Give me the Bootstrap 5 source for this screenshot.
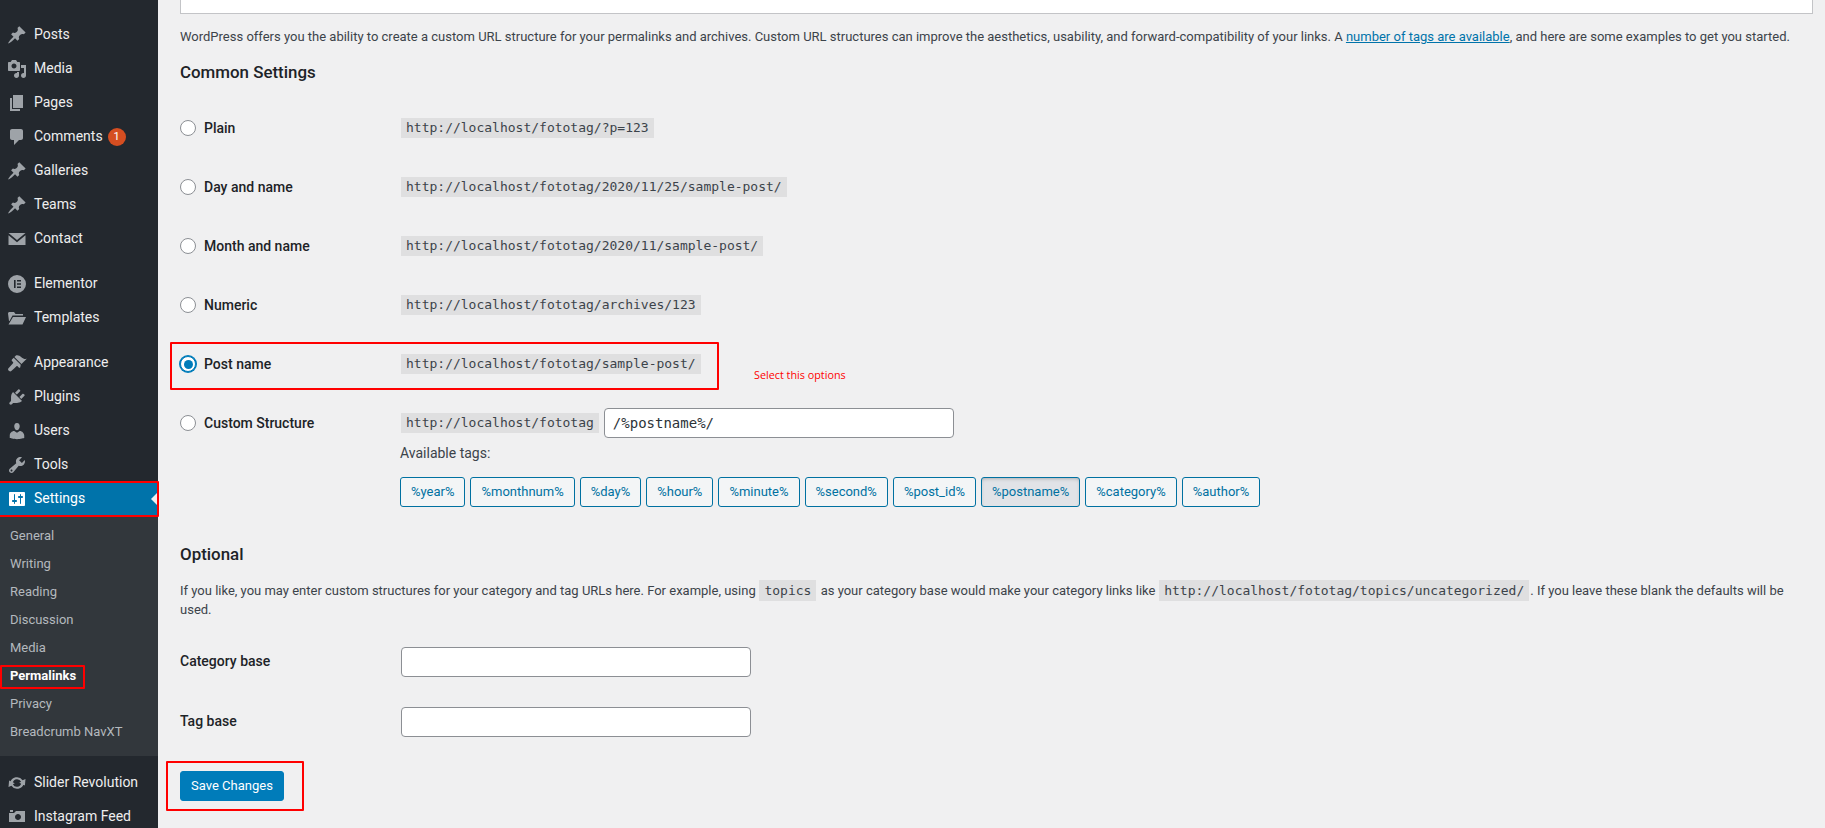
<!DOCTYPE html>
<html lang="en">
<head>
<meta charset="utf-8">
<title>Permalink Settings</title>
<link href="https://cdn.jsdelivr.net/npm/bootstrap@5.3.0/dist/css/bootstrap.min.css" rel="stylesheet">
<style>
html,body{height:828px;overflow:hidden}
body{background:#f0f0f1;font-family:Roboto,"Liberation Sans",sans-serif;font-size:13px;line-height:19.5px;color:#3c434a;position:relative}
.wp-side{width:158px;height:828px;background:#23282e;flex:none;overflow:hidden;padding-top:18px}
.wp-item{height:34px;display:flex;align-items:center;padding-left:7px;color:#eee;font-size:14px;text-decoration:none}
.wp-item svg{width:20px;height:20px;fill:#9ea3a8;margin-right:7px;flex:none}
.wp-gap{height:11px}
.wp-gap2{height:11px}
.wp-gap3{height:10px}
.wp-current{background:#0073aa;color:#fff;position:relative;height:34px}
.wp-current svg{fill:#fff}
.wp-current::after{content:"";position:absolute;right:0;top:10px;border:7px solid transparent;border-right-color:#f0f0f1;border-left-width:0}
.wp-sub{background:#32373c;padding:6px 0 10px}
.wp-sublink{display:block;height:28px;line-height:28px;padding-left:10px;font-size:13px;text-decoration:none}
.wp-sub .wp-sublink{color:#b4b9be}
.wp-sub .wp-on{color:#fff;font-weight:700}
.wp-bubble{display:inline-block;width:18px;height:18px;border-radius:50%;background:#d54e21;color:#fff;font-size:11px;line-height:18px;text-align:center;margin-left:5px}
.wp-main{flex:1 1 auto;padding:0 12px 0 22px;min-width:0}
.wp-topbox{height:14px;background:#fff;border:1px solid #c3c4c7;border-top:0}
.wp-intro{margin:13px 0 0;height:20px;white-space:nowrap}
.wp-intro a{color:#0073aa;text-decoration:underline}
.wp-h{font-size:16.9px;font-weight:500;color:#1d2327;line-height:22px;margin:0}
.wp-h1{margin-top:14px;margin-bottom:30px}
.wp-row{display:flex;align-items:flex-start;height:59px}
.wp-lab{width:220px;flex:none;display:flex;align-items:center;height:30px;font-size:14px;font-weight:500;color:#1d2327}
.wp-labtxt{padding-top:1px}
.wp-radio{width:16px;height:16px;border:1px solid #8c8f94;border-radius:50%;background:#fff;margin-right:8px;flex:none;display:block;position:relative}
.wp-radio.wp-sel{border-color:#007cba;box-shadow:0 0 0 1px #007cba}
.wp-radio.wp-sel::before{content:"";position:absolute;left:2.5px;top:2.5px;width:9px;height:9px;border-radius:50%;background:#007cba}
.wp-code{font-family:"DejaVu Sans Mono","Liberation Mono",monospace;font-size:13px;background:rgba(0,0,0,.07);color:#3c434a;padding:0 5px;margin-left:1px;line-height:20px;display:inline-block}
.wp-urlcell{height:30px;display:flex;align-items:center}
.wp-input{border:1px solid #8c8f94;border-radius:4px;background:#fff;height:30px}
.wp-struct{width:350px;margin-left:5px;padding:0 8px;font-family:"DejaVu Sans Mono","Liberation Mono",monospace;font-size:14px;color:#2c3338;line-height:28px}
.wp-avail{margin-top:6px;height:20px;font-size:14px}
.wp-tags{margin-top:12.5px;gap:5px}
.wp-tag{height:30px;border:1px solid #0071a1;border-radius:3px;background:#f3f5f6;color:#0071a1;font-size:13px;line-height:28px;padding:0 10px;display:block}
.wp-tag.wp-act{background:#e1e3e7;box-shadow:inset 0 2px 5px -3px rgba(0,0,0,.5)}
.wp-opt{margin-top:36px}
.wp-para{margin:16px 0 0;padding-right:2px;line-height:19px}
.wp-code2{font-family:"DejaVu Sans Mono","Liberation Mono",monospace;font-size:13px;line-height:1;background:rgba(0,0,0,.07);padding:3px 5px;margin:0 1px 0 .5px}
.wp-frow{display:flex;align-items:center;height:60px}
.wp-frow .wp-lab{height:auto;width:221px}
.wp-frow .wp-input{width:350px}
.wp-forms{margin-top:13px}
.wp-save{margin-top:19px;width:104px;height:30px;background:#007cba;color:#fff;border:1px solid #007cba;border-radius:3px;font-size:13px;line-height:28px;padding:0;display:block}
.wp-note{position:absolute;left:754px;top:366px;color:#f00;font-family:"Open Sans","Liberation Sans",sans-serif;font-size:10.8px;line-height:18px}
.wp-mark{position:absolute;border:2px solid #f00;border-radius:1px;pointer-events:none}
.wp-m1{left:170px;top:342px;width:549px;height:48px}
.wp-m2{left:-2px;top:481px;width:161px;height:36px}
.wp-m3{left:0;top:665px;width:85px;height:24px}
.wp-m4{left:166px;top:761px;width:138px;height:50px}
</style>
</head>
<body>
<div class="d-flex">
  <nav class="wp-side">
    <a class="wp-item"><svg viewBox="0 0 20 20"><path d="M10.44 3.02l1.82-1.82 6.36 6.35-1.83 1.82c-1.05-.68-2.48-.57-3.41.36l-.75.75c-.92.93-1.04 2.35-.35 3.41l-1.83 1.82-2.41-2.41-2.8 2.79c-.42.42-3.38 2.71-3.8 2.29s1.86-3.39 2.28-3.81l2.79-2.79L4.1 9.36l1.83-1.82c1.05.69 2.48.57 3.4-.36l.75-.75c.93-.92 1.05-2.35.36-3.41z"/></svg>Posts</a>
    <a class="wp-item"><svg viewBox="0 0 20 20"><path fill-rule="evenodd" d="M13 11V4c0-.55-.45-1-1-1h-1.670L9 1H5L3.670 3H2c-.55 0-1 .45-1 1v7c0 .55.45 1 1 1h10c.55 0 1-.45 1-1zM7 4.500c1.380 0 2.500 1.120 2.500 2.500S8.380 9.500 7 9.500 4.500 8.380 4.500 7 5.620 4.500 7 4.500zM14 6h5v10.500c0 1.380-1.120 2.500-2.500 2.500S14 17.880 14 16.500s1.120-2.500 2.500-2.500c.17 0 .34.02.5.05V9h-3V6zm-4 8.050V13h2v3.500c0 1.380-1.120 2.500-2.500 2.500S7 17.880 7 16.500 8.120 14 9.500 14c.17 0 .34.02.5.05z"/></svg>Media</a>
    <a class="wp-item"><svg viewBox="0 0 20 20"><path d="M6 15V2h10v13H6zm-1 1h8v2H3V5h2v11z"/></svg>Pages</a>
    <a class="wp-item"><svg viewBox="0 0 20 20"><path d="M5 2h9c1.100 0 2 .9 2 2v7c0 1.100-.9 2-2 2h-2l-5 5v-5H5c-1.100 0-2-.9-2-2V4c0-1.100.9-2 2-2z"/></svg>Comments<span class="wp-bubble">1</span></a>
    <a class="wp-item"><svg viewBox="0 0 20 20"><path d="M10.44 3.02l1.82-1.82 6.36 6.35-1.83 1.82c-1.05-.68-2.48-.57-3.41.36l-.75.75c-.92.93-1.04 2.35-.35 3.41l-1.83 1.82-2.41-2.41-2.8 2.79c-.42.42-3.38 2.71-3.8 2.29s1.86-3.39 2.28-3.81l2.79-2.79L4.1 9.36l1.83-1.82c1.05.69 2.48.57 3.4-.36l.75-.75c.93-.92 1.05-2.35.36-3.41z"/></svg>Galleries</a>
    <a class="wp-item"><svg viewBox="0 0 20 20"><path d="M10.44 3.02l1.82-1.82 6.36 6.35-1.83 1.82c-1.05-.68-2.48-.57-3.41.36l-.75.75c-.92.93-1.04 2.35-.35 3.41l-1.83 1.82-2.41-2.41-2.8 2.79c-.42.42-3.38 2.71-3.8 2.29s1.86-3.39 2.28-3.81l2.79-2.79L4.1 9.36l1.83-1.82c1.05.69 2.48.57 3.4-.36l.75-.75c.93-.92 1.05-2.35.36-3.41z"/></svg>Teams</a>
    <a class="wp-item"><svg viewBox="0 0 20 20"><path d="M1.500 4h17L10 11zM1.500 6.200V16h17V6.200L10 13.200z"/></svg>Contact</a>
    <div class="wp-gap"></div>
    <a class="wp-item"><svg viewBox="0 0 20 20"><path fill-rule="evenodd" d="M10 1a9 9 0 1 1 0 18 9 9 0 0 1 0-18zM7 6v8h1.600V6zm3 0v1.600h4V6zm0 3.200v1.600h4V9.200zm0 3.200V14h4v-1.600z"/></svg>Elementor</a>
    <a class="wp-item"><svg viewBox="0 0 20 20"><path d="M1 5.500C1 4.700 1.700 4 2.500 4H7l1.500 2H16v1.500H5.500L2.500 13H2zM6 9h13l-3.500 7.500H1.500z"/></svg>Templates</a>
    <div class="wp-gap2"></div>
    <a class="wp-item"><svg viewBox="0 0 20 20"><path d="M14.480 11.060L7.410 3.990l1.500-1.500c.5-.56 2.300-.47 3.510.32 1.210.8 1.430 1.280 2.910 2.100 1.180.64 2.450 1.260 4.450.85zm-.71.71L6.700 4.700 4.930 6.470c-.39.39-.39 1.020 0 1.410l1.060 1.060c.39.39.39 1.030 0 1.420-.6.6-1.060 1.200-1.800 1.900L1.500 15.300c-.6.6-.6 1.500 0 2.100l.7.7c.6.6 1.500.6 2.100 0l3.100-2.900c.7-.7 1.300-1.200 1.900-1.800.39-.39 1.030-.39 1.420 0l1.060 1.060c.39.39 1.020.39 1.410 0z"/></svg>Appearance</a>
    <a class="wp-item"><svg viewBox="0 0 20 20"><path d="M13.110 4.360L9.870 7.600 8 5.730l3.240-3.240c.35-.34 1.050-.2 1.560.32.52.51.66 1.210.31 1.550zm-8 1.770l.91-1.120 9.010 9.010-1.190.84c-.71.71-2.630 1.160-3.820 1.160H6.140L4.900 17.260c-.59.59-1.540.59-2.120 0-.59-.58-.59-1.530 0-2.120l1.240-1.240v-3.880c0-1.130.4-3.190 1.090-3.890zm7.260 3.970l3.240-3.240c.34-.35 1.040-.21 1.550.31.52.51.66 1.210.31 1.550l-3.240 3.250z"/></svg>Plugins</a>
    <a class="wp-item"><svg viewBox="0 0 20 20"><path d="M10 9.250c-2.270 0-2.730-3.440-2.730-3.440C7 4.020 7.820 2 9.970 2c2.160 0 2.980 2.020 2.710 3.810 0 0-.41 3.440-2.680 3.440zm0 2.570L12.720 10c2.390 0 4.520 2.330 4.520 4.530v2.490s-3.650 1.130-7.240 1.130c-3.650 0-7.240-1.130-7.240-1.130v-2.490c0-2.250 1.940-4.480 4.470-4.480z"/></svg>Users</a>
    <a class="wp-item"><svg viewBox="0 0 20 20"><path fill-rule="evenodd" d="M16.680 9.770c-1.340 1.340-3.300 1.670-4.950.99l-5.410 6.520c-.99.99-2.590.99-3.580 0s-.99-2.590 0-3.570l6.520-5.420c-.68-1.650-.35-3.610.99-4.950 1.280-1.280 3.120-1.620 4.720-1.060l-2.890 2.890 2.820 2.820 2.860-2.870c.53 1.580.18 3.390-1.080 4.650zM3.810 16.210c.4.39 1.040.39 1.430 0 .4-.4.4-1.040 0-1.430-.39-.4-1.030-.4-1.430 0-.39.39-.39 1.030 0 1.430z"/></svg>Tools</a>
    <a class="wp-item wp-current"><svg viewBox="0 0 20 20"><path fill-rule="evenodd" d="M18 16V4c0-.55-.45-1-1-1H3c-.55 0-1 .45-1 1v12c0 .55.45 1 1 1h14c.55 0 1-.45 1-1zM8 11h1c.55 0 1 .45 1 1s-.45 1-1 1H8v1.500c0 .28-.22.5-.5.5s-.5-.22-.5-.5V13H6c-.55 0-1-.45-1-1s.45-1 1-1h1V5.500c0-.28.22-.5.5-.5s.5.22.5.5V11zm5-2h-1c-.55 0-1-.45-1-1s.45-1 1-1h1V5.500c0-.28.22-.5.5-.5s.5.22.5.5V7h1c.55 0 1 .45 1 1s-.45 1-1 1h-1v5.500c0 .28-.22.5-.5.5s-.5-.22-.5-.5V9z"/></svg>Settings</a>
    <div class="wp-sub">
      <a class="wp-sublink">General</a><a class="wp-sublink">Writing</a><a class="wp-sublink">Reading</a><a class="wp-sublink">Discussion</a><a class="wp-sublink">Media</a><a class="wp-sublink wp-on">Permalinks</a><a class="wp-sublink">Privacy</a><a class="wp-sublink">Breadcrumb NavXT</a>
    </div>
    <div class="wp-gap3"></div>
    <a class="wp-item"><svg viewBox="0 0 20 20"><path d="M3.200 9.500A6.900 6.900 0 0 1 15.600 7.200L18.500 6l-.6 6.500-5.700-2.800 1.900-.9A4.400 4.400 0 0 0 5.800 9.500zM16.800 10.500A6.900 6.900 0 0 1 4.400 12.800L1.500 14l.6-6.500 5.700 2.800-1.900.9a4.400 4.400 0 0 0 8.300-.7z"/></svg>Slider Revolution</a>
    <a class="wp-item"><svg viewBox="0 0 20 20"><path fill-rule="evenodd" d="M6 5V3H3v2h3zm12 10V4H9L7 6H2v9h16zm-7-8c-1.660 0-3 1.340-3 3s1.340 3 3 3 3-1.340 3-3-1.340-3-3-3z"/></svg>Instagram Feed</a>
  </nav>
  <main class="wp-main">
    <div class="wp-topbox"></div>
    <p class="wp-intro">WordPress offers you the ability to create a custom URL structure for your permalinks and archives. Custom URL structures can improve the aesthetics, usability, and forward-compatibility of your links. A <a href="#">number of tags are available</a>, and here are some examples to get you started.</p>
    <h2 class="wp-h wp-h1">Common Settings</h2>
    <div class="wp-row"><div class="wp-lab"><span class="wp-radio"></span><span class="wp-labtxt">Plain</span></div><div class="wp-urlcell"><code class="wp-code">http://localhost/fototag/?p=123</code></div></div>
    <div class="wp-row"><div class="wp-lab"><span class="wp-radio"></span><span class="wp-labtxt">Day and name</span></div><div class="wp-urlcell"><code class="wp-code">http://localhost/fototag/2020/11/25/sample-post/</code></div></div>
    <div class="wp-row"><div class="wp-lab"><span class="wp-radio"></span><span class="wp-labtxt">Month and name</span></div><div class="wp-urlcell"><code class="wp-code">http://localhost/fototag/2020/11/sample-post/</code></div></div>
    <div class="wp-row"><div class="wp-lab"><span class="wp-radio"></span><span class="wp-labtxt">Numeric</span></div><div class="wp-urlcell"><code class="wp-code">http://localhost/fototag/archives/123</code></div></div>
    <div class="wp-row"><div class="wp-lab"><span class="wp-radio wp-sel"></span><span class="wp-labtxt">Post name</span></div><div class="wp-urlcell"><code class="wp-code">http://localhost/fototag/sample-post/</code></div></div>
    <div class="d-flex">
      <div class="wp-lab"><span class="wp-radio"></span><span class="wp-labtxt">Custom Structure</span></div>
      <div>
        <div class="wp-urlcell"><code class="wp-code">http://localhost/fototag</code><div class="wp-input wp-struct">/%postname%/</div></div>
        <div class="wp-avail">Available tags:</div>
        <div class="d-flex wp-tags">
          <span class="wp-tag">%year%</span><span class="wp-tag">%monthnum%</span><span class="wp-tag">%day%</span><span class="wp-tag">%hour%</span><span class="wp-tag">%minute%</span><span class="wp-tag">%second%</span><span class="wp-tag">%post_id%</span><span class="wp-tag wp-act">%postname%</span><span class="wp-tag">%category%</span><span class="wp-tag">%author%</span>
        </div>
      </div>
    </div>
    <h2 class="wp-h wp-opt">Optional</h2>
    <p class="wp-para">If you like, you may enter custom structures for your category and tag URLs here. For example, using <code class="wp-code2 text-reset">topics</code> as your category base would make your category links like <code class="wp-code2 text-reset">http://localhost/fototag/topics/uncategorized/</code>. If you leave these blank the defaults will be<br>used.</p>
    <div class="wp-forms">
      <div class="wp-frow"><div class="wp-lab">Category base</div><div class="wp-input"></div></div>
      <div class="wp-frow"><div class="wp-lab">Tag base</div><div class="wp-input"></div></div>
    </div>
    <button class="wp-save" type="button">Save Changes</button>
  </main>
</div>
<div class="wp-note">Select this options</div>
<div class="wp-mark wp-m1"></div>
<div class="wp-mark wp-m2"></div>
<div class="wp-mark wp-m3"></div>
<div class="wp-mark wp-m4"></div>
<script src="https://cdn.jsdelivr.net/npm/bootstrap@5.3.0/dist/js/bootstrap.bundle.min.js"></script>
</body>
</html>
